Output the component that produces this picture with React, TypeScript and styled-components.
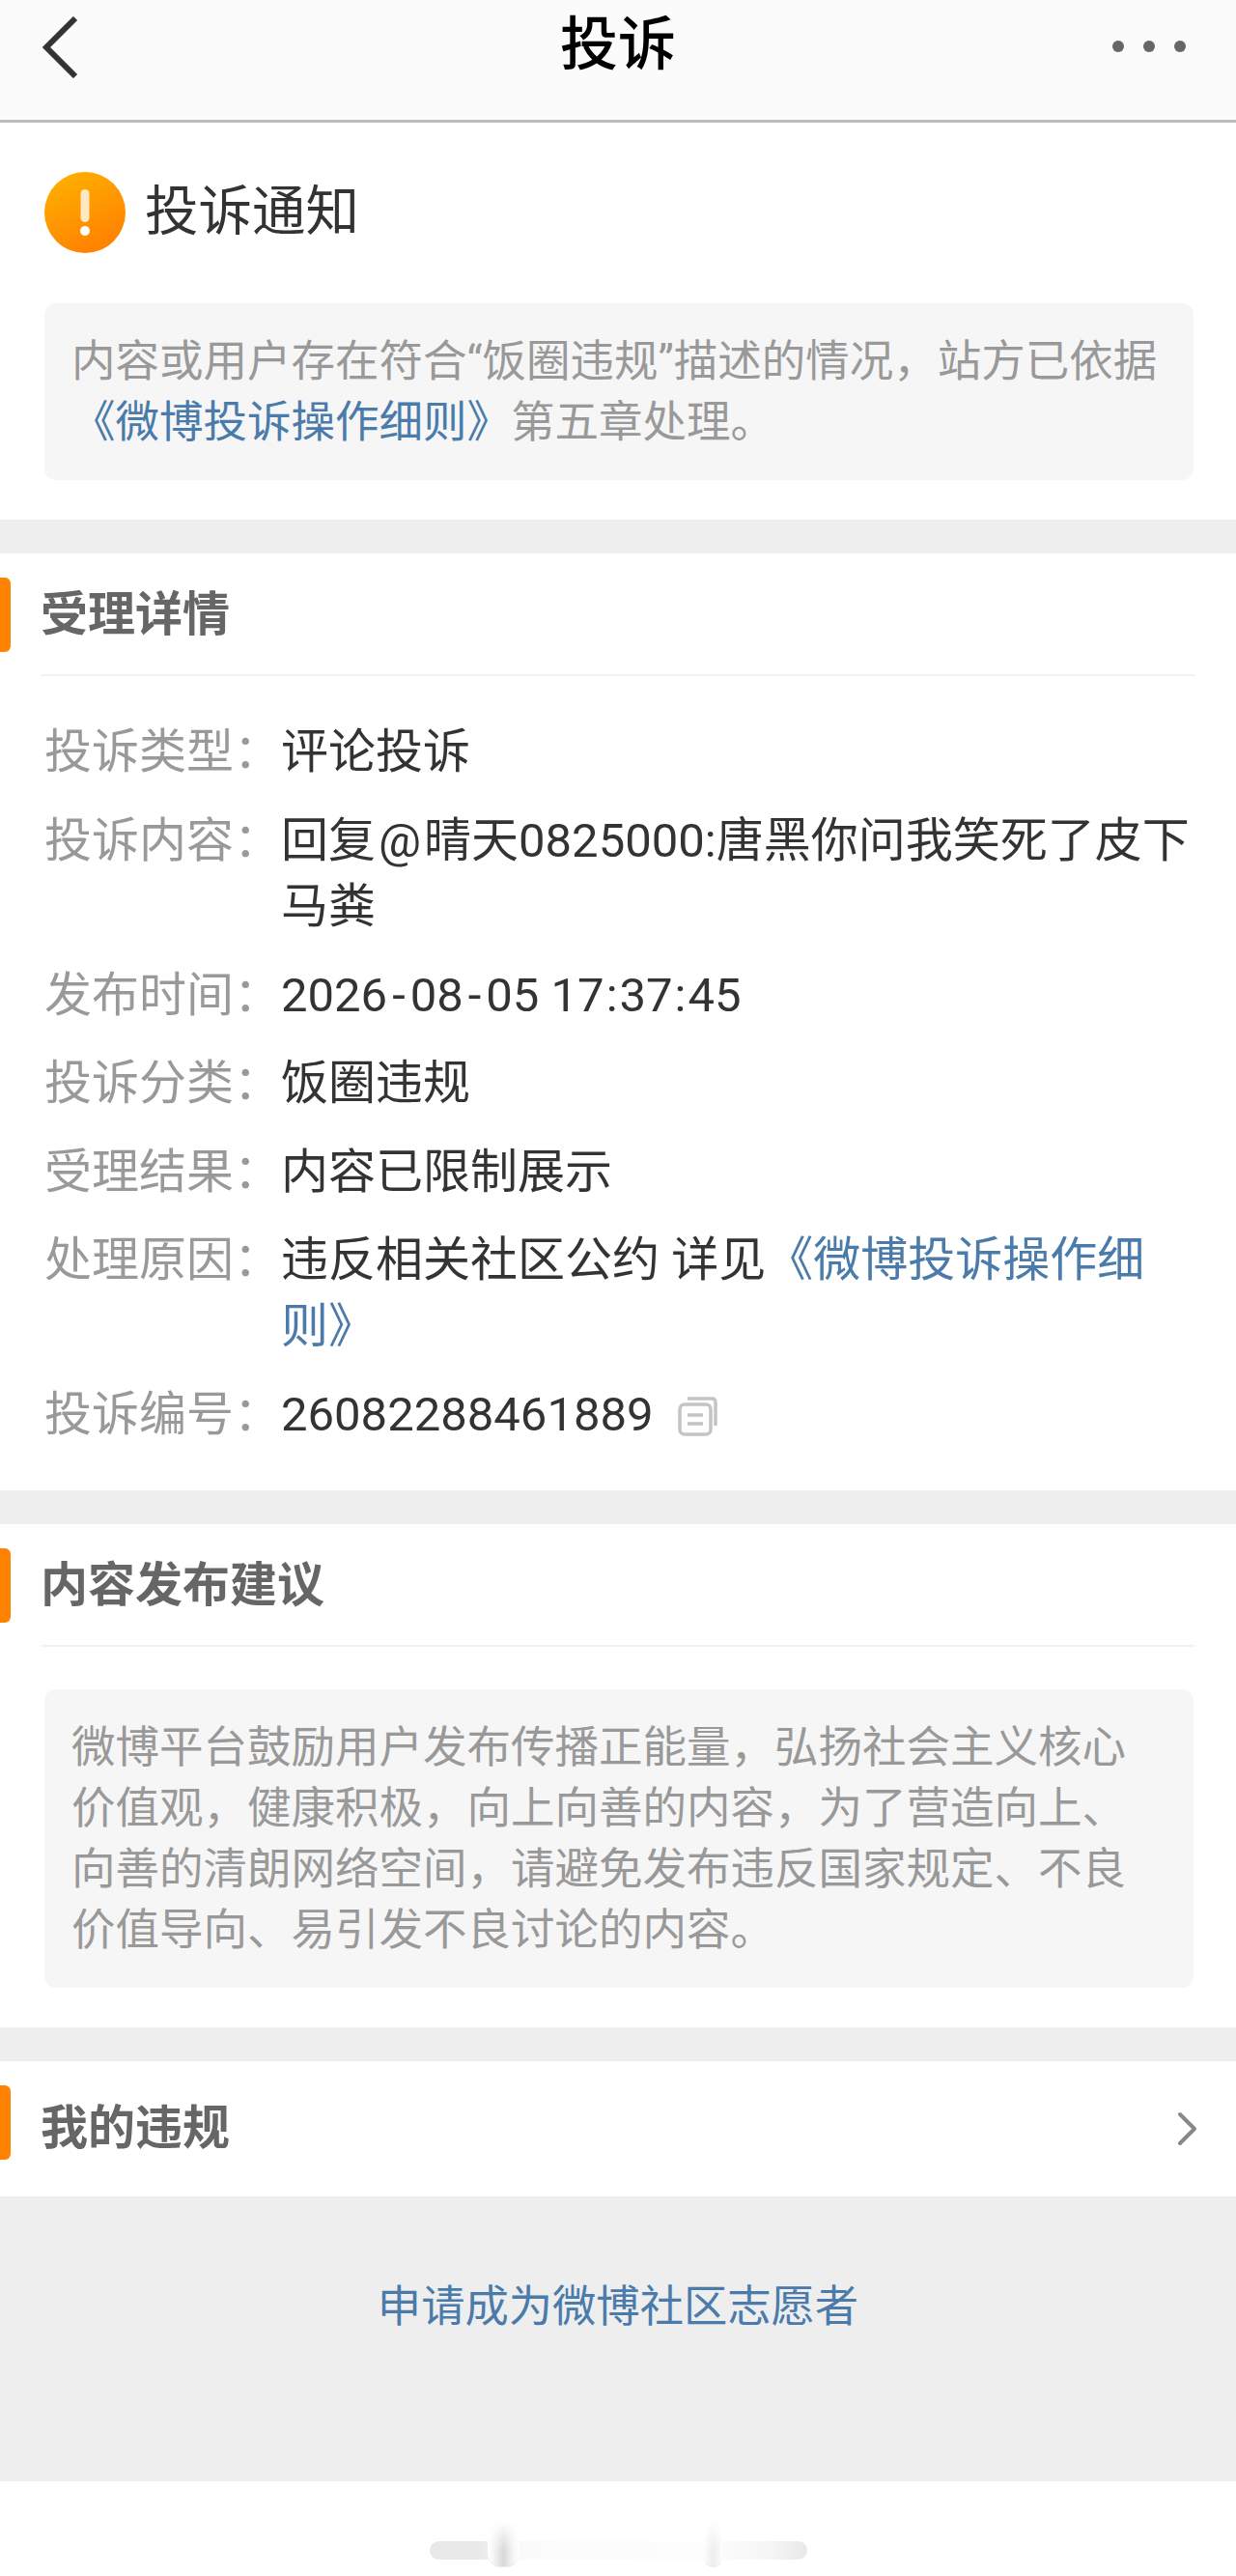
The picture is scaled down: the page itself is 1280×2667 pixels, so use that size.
import React from 'react'
import styled, { createGlobalStyle } from 'styled-components'

const GlobalStyle = createGlobalStyle`
  html, body {
    margin: 0;
    padding: 0;
    background: #fff;
  }
  body {
    font-family: Roboto, "Noto Sans CJK SC", sans-serif;
  }
`

const Page = styled.div`
  width: 1280px;
  height: 2667px;
  display: flex;
  flex-direction: column;
  background: #fff;
  overflow: hidden;
`

const Header = styled.header`
  height: 124px;
  flex: none;
  display: grid;
  grid-template-columns: 1fr auto 1fr;
  align-items: start;
  padding: 0 52px;
  background: #fbfbfb;
  border-bottom: 3px solid #bdbdbd;
`

const BackButton = styled.svg`
  width: 38px;
  height: 64px;
  margin: 17px 0 0 -8px;
  fill: none;
  stroke: #333;
  stroke-width: 6;
`

const HeaderTitle = styled.h1`
  margin: 0;
  font-size: 60px;
  line-height: 94px;
  font-weight: 500;
  color: #000;
`

const MoreDots = styled.div`
  display: flex;
  justify-content: flex-end;
  gap: 20px;
  margin-top: 42px;
`

const Dot = styled.span`
  width: 12px;
  height: 12px;
  border-radius: 50%;
  background: #666;
`

const Section = styled.section`
  position: relative;
  flex: none;
  padding: 0 42px;
  background: #fff;
`

const NoticeSection = styled(Section)`
  padding: 51px 44px 41px 46px;
`

const NoticeHead = styled.div`
  display: flex;
  align-items: center;
  gap: 20px;
  height: 84px;
  margin-bottom: 52px;
`

const NoticeTitle = styled.h2`
  margin: 0;
  font-size: 55.5px;
  line-height: 84px;
  font-weight: 400;
  color: #333;
`

const GrayBox = styled.div`
  background: #f6f6f6;
  border-radius: 12px;
  padding: 29px 28px 28px 28px;
  font-size: 45.5px;
  line-height: 63px;
  color: #999;
`

const BlueLink = styled.span`
  color: #4a7bab;
`

const Gap = styled.div`
  height: 35px;
  flex: none;
  background: #eee;
`

const SectionHead = styled.div<{ $divided?: boolean }>`
  position: relative;
  box-sizing: border-box;
  display: flex;
  align-items: center;
  justify-content: space-between;
  height: ${(p) => (p.$divided ? '127px' : '140px')};
  padding-top: ${(p) => (p.$divided ? '2px' : '0')};
  border-bottom: ${(p) => (p.$divided ? '2px solid #f2f2f2' : 'none')};

  &::before {
    content: '';
    position: absolute;
    left: -42px;
    top: 25px;
    width: 11px;
    height: 77px;
    border-radius: 0 6px 6px 0;
    background: #ff8200;
  }
`

const SectionTitle = styled.h3`
  margin: 0;
  font-size: 49px;
  line-height: 68px;
  font-weight: 700;
  color: #666;
`

const Rows = styled.dl`
  margin: 0;
  padding: 45px 0 43.5px 4px;
  display: flex;
  flex-direction: column;
  gap: 23px;
`

const Row = styled.div`
  display: flex;
  align-items: flex-start;
`

const Label = styled.dt`
  flex: none;
  width: 245px;
  white-space: nowrap;
  font-size: 49px;
  line-height: 68.5px;
  color: #999;
`

const Value = styled.dd`
  margin: 0;
  flex: 1;
  font-size: 49px;
  line-height: 68.5px;
  color: #333;
`

const TimeMark = styled.span<{ $space: number }>`
  margin: 0 ${(p) => p.$space}px;
`

const CopyIcon = styled.svg`
  width: 42px;
  height: 42px;
  margin-left: 25px;
  vertical-align: -6px;
  fill: none;
  stroke: #c4c4c4;
  stroke-width: 3.5;
`

const AdviceBody = styled.div`
  padding: 44px 2px 41px 4px;
`

const Chevron = styled.svg`
  width: 22px;
  height: 36px;
  margin-right: -3px;
  fill: none;
  stroke: #888;
  stroke-width: 4;
  stroke-linecap: round;
  stroke-linejoin: round;
`

const VolunteerArea = styled.div`
  flex: none;
  height: 295px;
  background: #eee;
  display: flex;
  justify-content: center;
  padding-top: 81px;
  box-sizing: border-box;
`

const VolunteerLink = styled.a`
  font-size: 45.3px;
  line-height: 68px;
  color: #4a7bab;
`

const GestureArea = styled.div`
  flex: 1;
  display: flex;
  justify-content: center;
  background: #fff;
  padding-top: 62px;
`

const GestureBar = styled.div`
  position: relative;
  width: 391px;
  height: 19px;
  border-radius: 10px;
  background: linear-gradient(90deg, #e8e8e8 0, #e8e8e8 12%, #fbfbfb 26%, #fdfdfd 72%, #f6f6f6 90%, #e8e8e8 100%);
`

const GestureHandle = styled.span<{ $left: number; $width: number; $tone: string }>`
  position: absolute;
  left: ${(p) => p.$left}px;
  top: -21px;
  width: ${(p) => p.$width}px;
  height: 47px;
  border-radius: 0 0 14px 14px;
  background:
    linear-gradient(180deg, #fff 0, rgba(255, 255, 255, 0) 65%),
    linear-gradient(90deg, #fff 0, #f6f6f6 18%, ${(p) => p.$tone} 50%, #f6f6f6 82%, #fff 100%);
  border-bottom: 1px solid #e8e8e8;
`

const COMMA = '\uFF0C'
const COLON = '\uFF1A'

const noticeText = `内容或用户存在符合“饭圈违规”描述的情况${COMMA}站方已依据`
const adviceText = `微博平台鼓励用户发布传播正能量${COMMA}弘扬社会主义核心价值观${COMMA}健康积极${COMMA}向上向善的内容${COMMA}为了营造向上、向善的清朗网络空间${COMMA}请避免发布违反国家规定、不良价值导向、易引发不良讨论的内容。`

const laterRows = [
  { label: `投诉分类${COLON}`, value: '饭圈违规' },
  { label: `受理结果${COLON}`, value: '内容已限制展示' },
]

export default function App() {
  return (
    <Page>
      <GlobalStyle />
      <Header>
        <BackButton viewBox="0 0 38 64">
          <path d="M34 2 L4 32 L34 62" />
        </BackButton>
        <HeaderTitle>投诉</HeaderTitle>
        <MoreDots>
          <Dot />
          <Dot />
          <Dot />
        </MoreDots>
      </Header>

      <NoticeSection>
        <NoticeHead>
          <svg width="84" height="84" viewBox="0 0 84 84">
            <defs>
              <linearGradient id="warn" x1="0.2" y1="0" x2="0.7" y2="1">
                <stop offset="0" stopColor="#ffb000" />
                <stop offset="1" stopColor="#ff7f00" />
              </linearGradient>
            </defs>
            <circle cx="42" cy="42" r="42" fill="url(#warn)" />
            <rect x="37.5" y="18" width="9" height="34" rx="4.5" fill="#ffe9c4" />
            <circle cx="42" cy="61" r="5" fill="#fff" />
          </svg>
          <NoticeTitle>投诉通知</NoticeTitle>
        </NoticeHead>
        <GrayBox>
          {noticeText}
          <BlueLink>《微博投诉操作细则》</BlueLink>第五章处理。
        </GrayBox>
      </NoticeSection>
      <Gap />

      <Section>
        <SectionHead $divided>
          <SectionTitle>受理详情</SectionTitle>
        </SectionHead>
        <Rows>
          <Row>
            <Label>投诉类型{COLON}</Label>
            <Value>评论投诉</Value>
          </Row>
          <Row>
            <Label>投诉内容{COLON}</Label>
            <Value>
              回复<TimeMark $space={3}>@</TimeMark>晴天0825000:唐黑你问我笑死了皮下马粪
            </Value>
          </Row>
          <Row>
            <Label>发布时间{COLON}</Label>
            <Value>
              2026<TimeMark $space={5}>-</TimeMark>08<TimeMark $space={5}>-</TimeMark>05 17
              <TimeMark $space={2}>:</TimeMark>37<TimeMark $space={2}>:</TimeMark>45
            </Value>
          </Row>
          {laterRows.map((r) => (
            <Row key={r.label}>
              <Label>{r.label}</Label>
              <Value>{r.value}</Value>
            </Row>
          ))}
          <Row>
            <Label>处理原因{COLON}</Label>
            <Value>
              违反相关社区公约 详见<BlueLink>《微博投诉操作细则》</BlueLink>
            </Value>
          </Row>
          <Row>
            <Label>投诉编号{COLON}</Label>
            <Value>
              26082288461889
              <CopyIcon viewBox="0 0 42 42">
                <path d="M10 3 H35 Q39 3 39 7 V31" />
                <rect x="2" y="9" width="32" height="31" rx="5" />
                <path d="M10 20 H26 M10 29 H26" />
              </CopyIcon>
            </Value>
          </Row>
        </Rows>
      </Section>
      <Gap />

      <Section>
        <SectionHead $divided>
          <SectionTitle>内容发布建议</SectionTitle>
        </SectionHead>
        <AdviceBody>
          <GrayBox>{adviceText}</GrayBox>
        </AdviceBody>
      </Section>
      <Gap />

      <Section>
        <SectionHead>
          <SectionTitle>我的违规</SectionTitle>
          <Chevron viewBox="0 0 22 36">
            <path d="M3 3 L18 18 L3 33" />
          </Chevron>
        </SectionHead>
      </Section>

      <VolunteerArea>
        <VolunteerLink>申请成为微博社区志愿者</VolunteerLink>
      </VolunteerArea>

      <GestureArea>
        <GestureBar>
          <GestureHandle $left={60} $width={33} $tone="#d8d8d8" />
          <GestureHandle $left={284} $width={19} $tone="#eeeeee" />
        </GestureBar>
      </GestureArea>
    </Page>
  )
}
